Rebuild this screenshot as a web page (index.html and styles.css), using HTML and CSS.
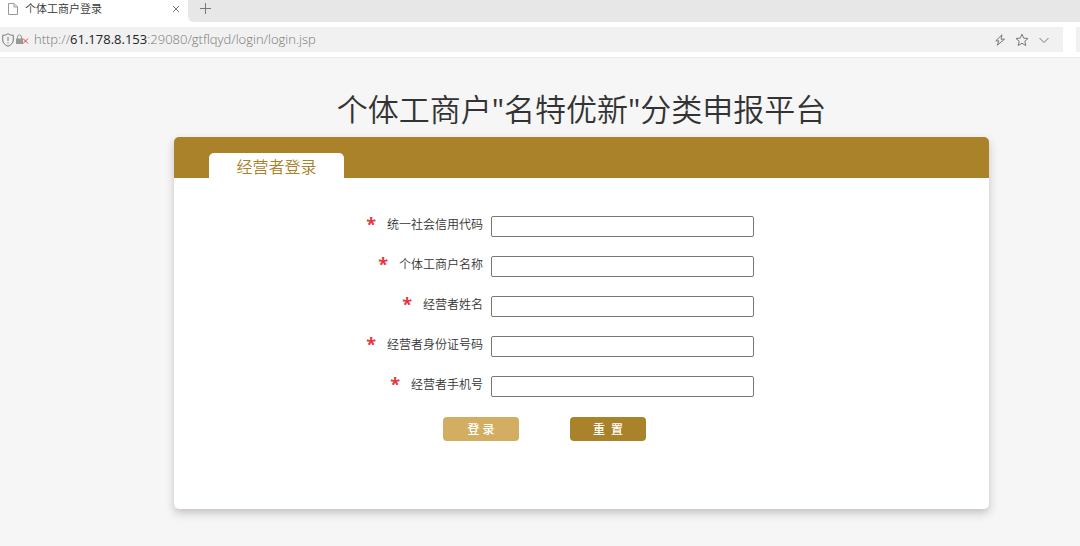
FILE: index.html
```html
<!DOCTYPE html>
<html lang="zh-CN">
<head>
<meta charset="utf-8">
<title>个体工商户登录</title>
<link rel="stylesheet" href="styles.css">
</head>
<body>
<header class="browser">
  <div class="tabs">
    <div class="tab">
      <svg class="tab-file" viewBox="0 0 10 12" width="10" height="12" aria-hidden="true"><path d="M.5.5h5.500l3.500 3.500v7.500h-9zM6 .5V4h3.500"/></svg>
      <span class="tab-title">个体工商户登录</span>
      <button class="icon-button" type="button" aria-label="关闭标签页"><svg viewBox="0 0 8 8" width="8" height="8"><path d="M1 1l6 6M7 1L1 7"/></svg></button>
    </div>
    <div class="strip">
      <button class="icon-button" type="button" aria-label="新建标签页"><svg viewBox="0 0 11 11" width="11" height="11"><path d="M5.500 0v11M0 5.500h11"/></svg></button>
    </div>
  </div>
  <div class="toolbar">
    <div class="address">
      <svg class="shield" viewBox="0 0 12 14" width="12" height="14" aria-hidden="true"><path d="M6 .7C4.500 1.900 2.700 2.300.7 2.300V7c0 3 2.300 5 5.300 6.300C9 12 11.300 10 11.300 7V2.300C9.300 2.300 7.500 1.900 6 .7zM6 4v4M6 9.300v1.200"/></svg>
      <svg class="lock" viewBox="0 0 13 11" width="13" height="11" aria-hidden="true"><path class="lock-body" d="M0 4.500h7V10H0z"/><path class="lock-arch" d="M1.500 5V3a2 2 0 0 1 4 0v2"/><path class="lock-cross" d="M7 4.500l5 5M12 4.500l-5 5"/></svg>
      <span class="url">http://<b>61.178.8.153</b>:29080/gtflqyd/login/login.jsp</span>
      <div class="actions">
        <button class="icon-button" type="button" aria-label="极速模式"><svg viewBox="0 0 12 12" width="12" height="12"><path d="M8 .8L1.800 6.800h3L3.300 11.200l7.200-6H7z"/></svg></button>
        <button class="icon-button" type="button" aria-label="收藏"><svg viewBox="0 0 14 14" width="14" height="14"><path d="M7 1.200l1.700 3.900 4.300.4-3.200 2.800 1 4.200L7 10.300l-3.800 2.200 1-4.200L1 5.500l4.300-.4z"/></svg></button>
        <button class="icon-button" type="button" aria-label="更多"><svg viewBox="0 0 12 12" width="12" height="12"><path d="M1.500 4L6 8.500 10.500 4"/></svg></button>
      </div>
    </div>
    <div class="search"></div>
  </div>
</header>
<main class="page">
  <h1 class="title">个体工商户<span class="quote">"</span>名特优新<span class="quote">"</span>分类申报平台</h1>
  <section class="card">
    <div class="card-head">
      <button class="card-tab" type="button">经营者登录</button>
    </div>
    <form class="form">
      <div class="row"><label class="label" for="code"><span class="star">*</span>统一社会信用代码</label><input class="field" id="code" type="text"></div>
      <div class="row"><label class="label" for="shop"><span class="star">*</span>个体工商户名称</label><input class="field" id="shop" type="text"></div>
      <div class="row"><label class="label" for="owner"><span class="star">*</span>经营者姓名</label><input class="field" id="owner" type="text"></div>
      <div class="row"><label class="label" for="idno"><span class="star">*</span>经营者身份证号码</label><input class="field" id="idno" type="text"></div>
      <div class="row"><label class="label" for="phone"><span class="star">*</span>经营者手机号</label><input class="field" id="phone" type="text"></div>
      <div class="buttons">
        <button class="button login" type="submit">登 录</button>
        <button class="button reset" type="reset">重&nbsp; 置</button>
      </div>
    </form>
  </section>
</main>
</body>
</html>
```
FILE: styles.css
```css
* { box-sizing: border-box; }
body {
  margin: 0;
  min-height: 100vh;
  display: flex;
  flex-direction: column;
  background: #fff;
  color: #333;
  font-family: "Open Sans", "Noto Sans CJK SC", sans-serif;
  font-size: 12px;
}
button, input { font: inherit; }
svg { display: block; fill: none; stroke: #777; }

.browser { border-bottom: 1px solid #e9e9e9; }
.tabs { display: flex; height: 22px; background: #fff; }
.tab {
  display: flex;
  align-items: center;
  width: 188px;
  padding: 0 8px 4px;
}
.tab-file { stroke: #999; }
.tab-title { flex: 1; margin-left: 7px; font-size: 11px; font-weight: 350; line-height: 16px; }
.strip {
  flex: 1;
  display: flex;
  align-items: center;
  padding: 0 12px 5px;
  background: #e7e7e7;
  border-bottom-left-radius: 6px;
}
.icon-button { padding: 0; border: 0; background: none; }
.toolbar { display: flex; gap: 13px; padding: 5px 0; }
.address {
  flex: 1;
  display: flex;
  align-items: center;
  height: 25px;
  padding: 0 13px 0 2px;
  background: #f1f1f1;
}
.lock { margin-left: 2px; }
.lock-body { fill: #999; stroke: none; }
.lock-arch { stroke: #999; }
.lock-cross { stroke: #d9444c; }
.url { flex: 1; margin-left: 5px; padding-bottom: 2px; color: #777; font-size: 13px; font-weight: 300; line-height: 22px; }
.url b { color: #222; font-weight: 400; }
.actions { display: flex; align-items: center; gap: 9px; }
.search { width: 4px; background: #f1f1f1; }

.page {
  flex: 1;
  padding: 27px 91px 37px 174px;
  background: #f6f6f6;
  border-bottom: 1px solid #fff;
}
.title {
  margin: 0 0 3px;
  font-size: 31px;
  font-weight: 350;
  line-height: 49px;
  text-align: center;
}
.quote { font-weight: 400; }
.card {
  background: #fff;
  border-radius: 5px;
  box-shadow: 0 4px 8px #c6bfc1;
}
.card-head {
  display: flex;
  align-items: flex-end;
  height: 41px;
  padding-left: 35px;
  background: #aa8229;
  border-radius: 5px 5px 0 0;
}
.card-tab {
  width: 135px;
  height: 25px;
  padding: 4px 0 0;
  border: 0;
  border-radius: 5px 5px 0 0;
  background: #fff;
  color: #aa8229;
  font-size: 16px;
  font-weight: 350;
  line-height: 21px;
}
.form { padding: 38px 24px 68px; }
.row {
  display: grid;
  grid-template-columns: 285px 263px;
  column-gap: 8px;
  height: 40px;
  align-items: start;
}
.label {
  display: flex;
  justify-content: flex-end;
  align-items: center;
  gap: 11px;
  font-weight: 350;
  line-height: 18px;
}
.star { color: #e8333c; font-size: 18px; font-weight: 700; line-height: 14px; height: 16px; }
.field {
  width: 100%;
  height: 21px;
  padding: 0 4px;
  border: 1px solid #777;
  border-radius: 2px;
  background: #fff;
}
.buttons { display: flex; gap: 51px; padding: 1px 0 0 245px; }
.button {
  width: 76px;
  height: 24px;
  padding: 1px 0 0;
  border: 0;
  border-radius: 4px;
  color: #fff;
  font-weight: 500;
  line-height: 23px;
}
.login { background: #d2ad62; }
.reset { background: #aa8229; }
```
